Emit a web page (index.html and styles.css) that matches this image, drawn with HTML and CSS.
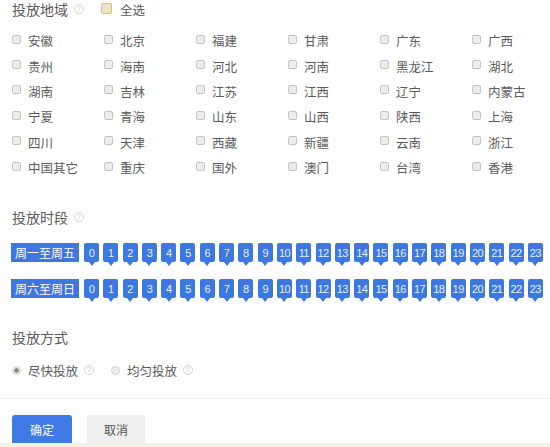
FILE: index.html
```html
<!DOCTYPE html>
<html lang="zh">
<head>
<meta charset="utf-8">
<link rel="stylesheet" href="styles.css">
</head>
<body>
<div class="page">
  <section class="region">
    <div class="head">
      <span class="title">投放地域</span><span class="help">?</span>
      <label class="all"><span class="cb cb-all"></span>全选</label>
    </div>
    <div class="grid">
      <label class="item"><span class="cb"></span>安徽</label>
      <label class="item"><span class="cb"></span>北京</label>
      <label class="item"><span class="cb"></span>福建</label>
      <label class="item"><span class="cb"></span>甘肃</label>
      <label class="item"><span class="cb"></span>广东</label>
      <label class="item"><span class="cb"></span>广西</label>
      <label class="item"><span class="cb"></span>贵州</label>
      <label class="item"><span class="cb"></span>海南</label>
      <label class="item"><span class="cb"></span>河北</label>
      <label class="item"><span class="cb"></span>河南</label>
      <label class="item"><span class="cb"></span>黑龙江</label>
      <label class="item"><span class="cb"></span>湖北</label>
      <label class="item"><span class="cb"></span>湖南</label>
      <label class="item"><span class="cb"></span>吉林</label>
      <label class="item"><span class="cb"></span>江苏</label>
      <label class="item"><span class="cb"></span>江西</label>
      <label class="item"><span class="cb"></span>辽宁</label>
      <label class="item"><span class="cb"></span>内蒙古</label>
      <label class="item"><span class="cb"></span>宁夏</label>
      <label class="item"><span class="cb"></span>青海</label>
      <label class="item"><span class="cb"></span>山东</label>
      <label class="item"><span class="cb"></span>山西</label>
      <label class="item"><span class="cb"></span>陕西</label>
      <label class="item"><span class="cb"></span>上海</label>
      <label class="item"><span class="cb"></span>四川</label>
      <label class="item"><span class="cb"></span>天津</label>
      <label class="item"><span class="cb"></span>西藏</label>
      <label class="item"><span class="cb"></span>新疆</label>
      <label class="item"><span class="cb"></span>云南</label>
      <label class="item"><span class="cb"></span>浙江</label>
      <label class="item"><span class="cb"></span>中国其它</label>
      <label class="item"><span class="cb"></span>重庆</label>
      <label class="item"><span class="cb"></span>国外</label>
      <label class="item"><span class="cb"></span>澳门</label>
      <label class="item"><span class="cb"></span>台湾</label>
      <label class="item"><span class="cb"></span>香港</label>
    </div>
  </section>

  <section class="time">
    <div class="head"><span class="title">投放时段</span><span class="help">?</span></div>
    <div class="dayrow">
      <span class="day">周一至周五</span>
      <span class="hr">0</span><span class="hr">1</span><span class="hr">2</span><span class="hr">3</span><span class="hr">4</span><span class="hr">5</span><span class="hr">6</span><span class="hr">7</span><span class="hr">8</span><span class="hr">9</span><span class="hr">10</span><span class="hr">11</span><span class="hr">12</span><span class="hr">13</span><span class="hr">14</span><span class="hr">15</span><span class="hr">16</span><span class="hr">17</span><span class="hr">18</span><span class="hr">19</span><span class="hr">20</span><span class="hr">21</span><span class="hr">22</span><span class="hr">23</span>
    </div>
    <div class="dayrow">
      <span class="day">周六至周日</span>
      <span class="hr">0</span><span class="hr">1</span><span class="hr">2</span><span class="hr">3</span><span class="hr">4</span><span class="hr">5</span><span class="hr">6</span><span class="hr">7</span><span class="hr">8</span><span class="hr">9</span><span class="hr">10</span><span class="hr">11</span><span class="hr">12</span><span class="hr">13</span><span class="hr">14</span><span class="hr">15</span><span class="hr">16</span><span class="hr">17</span><span class="hr">18</span><span class="hr">19</span><span class="hr">20</span><span class="hr">21</span><span class="hr">22</span><span class="hr">23</span>
    </div>
  </section>

  <section class="mode">
    <div class="head"><span class="title">投放方式</span></div>
    <div class="radios">
      <label class="radio"><span class="rd rd-on"></span>尽快投放<span class="help">?</span></label>
      <label class="radio"><span class="rd"></span>均匀投放<span class="help">?</span></label>
    </div>
  </section>

  <div class="divider"></div>

  <div class="actions">
    <button class="btn btn-primary">确定</button>
    <button class="btn btn-default">取消</button>
  </div>
  <div class="strip"></div>
</div>
</body>
</html>
```

FILE: styles.css
```css
html, body {
  margin: 0;
  padding: 0;
  background: #ffffff;
}

body {
  font-family: "Noto Sans CJK SC", "Noto Sans", sans-serif;
  color: #5a5a5a;
  font-size: 12px;
  width: 550px;
  height: 447px;
  overflow: hidden;
}

.page {
  display: flex;
  flex-direction: column;
}

.region, .time, .mode {
  padding-left: 12px;
}

.head {
  display: flex;
  align-items: center;
  height: 18px;
}

.title {
  font-size: 14px;
  color: #5a5a5a;
  line-height: 18px;
}

.help {
  display: inline-flex;
  align-items: center;
  justify-content: center;
  width: 8px;
  height: 8px;
  border: 1px solid #d4d4d4;
  border-radius: 50%;
  color: #c8c8c8;
  font-size: 7px;
  line-height: 8px;
  margin-left: 6px;
  font-family: "Liberation Sans", sans-serif;
}

.all {
  display: flex;
  align-items: center;
  margin-left: 17px;
  font-size: 12.5px;
  color: #5a5a5a;
}

.cb {
  display: inline-block;
  width: 7px;
  height: 7px;
  border: 1px solid #c4c4c4;
  border-radius: 2px;
  background: #ececec;
  margin-right: 7px;
}

.cb-all {
  width: 9px;
  height: 9px;
  border-color: #d6be7e;
  background: #ece2c4;
  margin-right: 8px;
  margin-top: -2px;
}

.grid {
  margin-top: 10px;
  display: grid;
  grid-template-columns: repeat(6, 92px);
  grid-auto-rows: 25.4px;
}

.item {
  display: flex;
  align-items: center;
  font-size: 12.5px;
  color: #5a5a5a;
}

.item .cb {
  margin-top: -3px;
}

.time {
  margin-top: 28px;
}

.dayrow {
  display: flex;
  align-items: flex-start;
  height: 19px;
  margin-top: 17px;
}

.day {
  display: flex;
  align-items: center;
  justify-content: center;
  width: 68px;
  height: 19px;
  background: #3d78e0;
  color: #ffffff;
  font-size: 12px;
  margin-left: -1px;
  margin-right: 5px;
}

.hr {
  position: relative;
  display: flex;
  align-items: center;
  justify-content: center;
  width: 15px;
  height: 19px;
  background: #3d78e0;
  border-radius: 2px;
  color: #e6eeff;
  font-family: "Liberation Sans", sans-serif;
  font-size: 11px;
  letter-spacing: -0.6px;
  margin-right: 4.3px;
}

.hr::after {
  content: "";
  position: absolute;
  left: 50%;
  bottom: -4px;
  margin-left: -3px;
  border-left: 3px solid transparent;
  border-right: 3px solid transparent;
  border-top: 4px solid #3d78e0;
}

.mode {
  margin-top: 30px;
}

.radios {
  display: flex;
  align-items: center;
  height: 18px;
  margin-top: 15px;
}

.radio {
  display: flex;
  align-items: center;
  font-size: 12.5px;
  color: #5a5a5a;
  margin-right: 17px;
}

.rd {
  display: inline-block;
  box-sizing: border-box;
  width: 9px;
  height: 9px;
  border-radius: 50%;
  border: 1px solid #cfcfcf;
  background: #ececec;
  margin-right: 7px;
}

.rd-on {
  background: radial-gradient(circle, #8a8a8a 0 2px, #ececec 2.5px);
}

.divider {
  height: 1px;
  background: #efefef;
  margin-top: 19px;
}

.actions {
  display: flex;
  gap: 15px;
  padding-left: 12px;
  margin-top: 16px;
}

.btn {
  font-family: "Noto Sans CJK SC", sans-serif;
  font-size: 12px;
  height: 28px;
  border: none;
  border-radius: 3px 3px 0 0;
  padding: 0;
}

.btn-primary {
  width: 60px;
  background: #3f7ae6;
  color: #ffffff;
}

.btn-default {
  width: 58px;
  background: #eeeeee;
  color: #555555;
}

.strip {
  height: 6px;
  background: #f4f1e6;
}
```
